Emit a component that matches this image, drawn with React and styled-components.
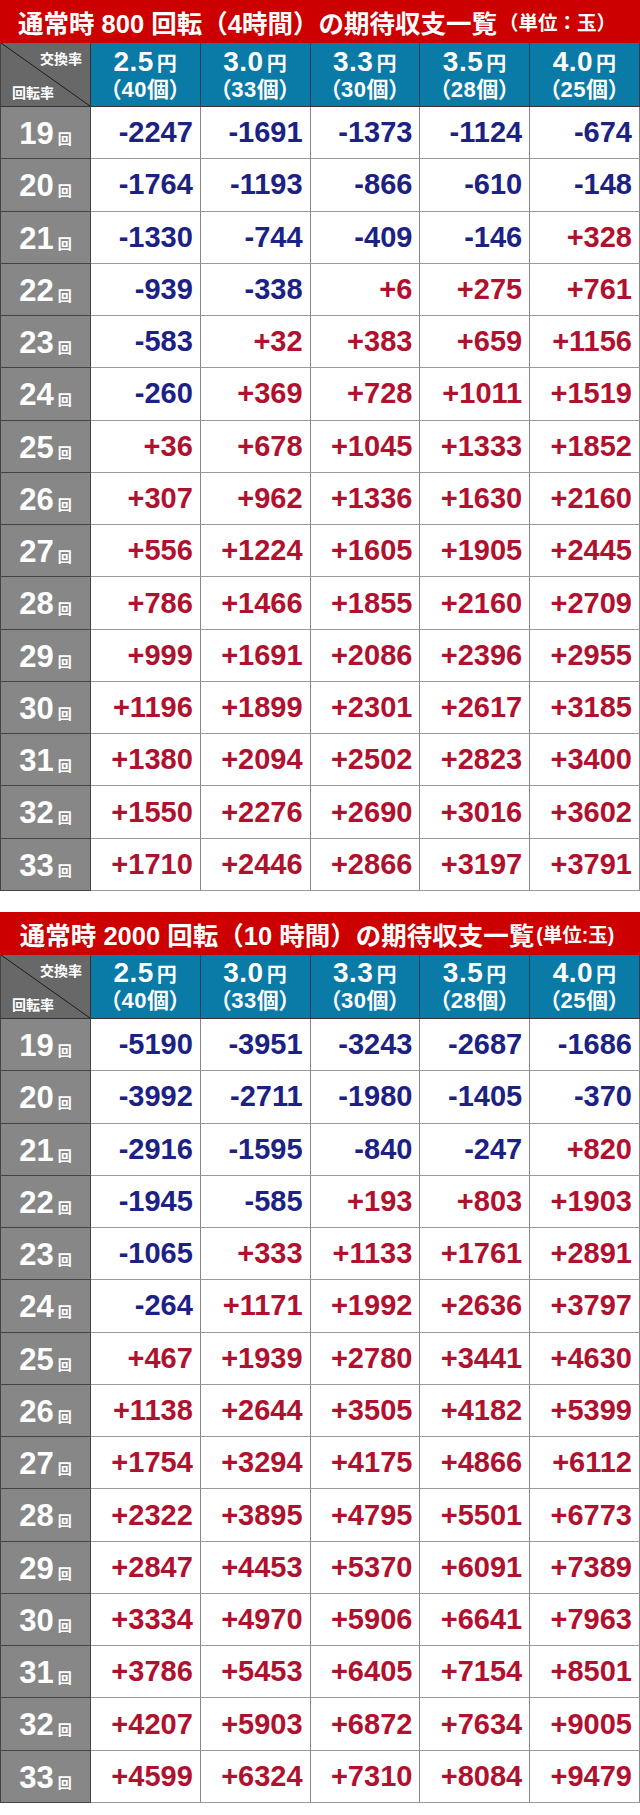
import React from "react";
import styled, {createGlobalStyle} from "styled-components";

const rates = [
  {yen: "2.5", balls: "40"},
  {yen: "3.0", balls: "33"},
  {yen: "3.3", balls: "30"},
  {yen: "3.5", balls: "28"},
  {yen: "4.0", balls: "25"},
];

const tables = [
  {
    title: "通常時 800 回転（4時間）の期待収支一覧",
    unit: "（単位：玉）",
    rows: [
      [-2247, -1691, -1373, -1124, -674],
      [-1764, -1193, -866, -610, -148],
      [-1330, -744, -409, -146, 328],
      [-939, -338, 6, 275, 761],
      [-583, 32, 383, 659, 1156],
      [-260, 369, 728, 1011, 1519],
      [36, 678, 1045, 1333, 1852],
      [307, 962, 1336, 1630, 2160],
      [556, 1224, 1605, 1905, 2445],
      [786, 1466, 1855, 2160, 2709],
      [999, 1691, 2086, 2396, 2955],
      [1196, 1899, 2301, 2617, 3185],
      [1380, 2094, 2502, 2823, 3400],
      [1550, 2276, 2690, 3016, 3602],
      [1710, 2446, 2866, 3197, 3791],
    ],
  },
  {
    title: "通常時 2000 回転（10 時間）の期待収支一覧",
    unit: "(単位:玉)",
    rows: [
      [-5190, -3951, -3243, -2687, -1686],
      [-3992, -2711, -1980, -1405, -370],
      [-2916, -1595, -840, -247, 820],
      [-1945, -585, 193, 803, 1903],
      [-1065, 333, 1133, 1761, 2891],
      [-264, 1171, 1992, 2636, 3797],
      [467, 1939, 2780, 3441, 4630],
      [1138, 2644, 3505, 4182, 5399],
      [1754, 3294, 4175, 4866, 6112],
      [2322, 3895, 4795, 5501, 6773],
      [2847, 4453, 5370, 6091, 7389],
      [3334, 4970, 5906, 6641, 7963],
      [3786, 5453, 6405, 7154, 8501],
      [4207, 5903, 6872, 7634, 9005],
      [4599, 6324, 7310, 8084, 9479],
    ],
  },
];

const App = () => {
  return (
    <Page>
      <GlobalStyle />
      {tables.map((t, ti) => (
        <Table key={ti}>
          <Title>
            {t.title}
            <Unit>{t.unit}</Unit>
          </Title>
          <Corner>
            <CornerTop>交換率</CornerTop>
            <CornerBottom>回転率</CornerBottom>
          </Corner>
          {rates.map((r) => (
            <RateHead key={r.yen}>
              <RateLine>
                {r.yen}
                <Yen>円</Yen>
              </RateLine>
              <BallLine>（{r.balls}個）</BallLine>
            </RateHead>
          ))}
          {t.rows.map((row, i) => (
            <React.Fragment key={i}>
              <SpinLabel>
                {19 + i}
                <Kai>回</Kai>
              </SpinLabel>
              {row.map((v, j) => (
                <Value key={j} $plus={v > 0}>
                  {v > 0 ? "+" + v : v}
                </Value>
              ))}
            </React.Fragment>
          ))}
        </Table>
      ))}
    </Page>
  );
};

const GlobalStyle = createGlobalStyle`
  body {
    margin: 0;
    background: #ffffff;
    font-family: "Liberation Sans", "Noto Sans CJK JP", sans-serif;
  }
`;

const Page = styled.div`
  width: 640px;
  display: flex;
  flex-direction: column;
  gap: 21px;
`;

const Table = styled.div`
  display: grid;
  grid-template-columns: 91px repeat(5, 1fr);
  grid-template-rows: 43px 64px repeat(15, 52.27px);
`;

const Title = styled.div`
  grid-column: 1 / -1;
  background: #cc0000;
  color: #ffffff;
  font-weight: bold;
  font-size: 25.5px;
  display: flex;
  align-items: center;
  justify-content: center;
  white-space: nowrap;
  padding-right: 6px;
`;

const Unit = styled.span`
  font-size: 19.5px;
  margin-left: 2px;
`;

const Corner = styled.div`
  box-sizing: border-box;
  border-left: 1px solid #444;
  border-bottom: 1px solid #333;
  border-right: 1px solid #333;
  background: linear-gradient(
    to top right,
    #686868 calc(50% - 0.8px),
    #1a1a1a 50%,
    #686868 calc(50% + 0.8px)
  );
  color: #ffffff;
  font-weight: bold;
  font-size: 14px;
  display: flex;
  flex-direction: column;
  justify-content: space-between;
  padding: 5px 8px 4px 11px;
`;

const CornerTop = styled.div`
  align-self: flex-end;
`;

const CornerBottom = styled.div`
  align-self: flex-start;
`;

const RateHead = styled.div`
  box-sizing: border-box;
  background: #0a7aa6;
  border-right: 1px solid #1c3f55;
  border-bottom: 1px solid #333;
  color: #ffffff;
  font-weight: bold;
  display: flex;
  flex-direction: column;
  align-items: center;
  justify-content: center;
`;

const RateLine = styled.div`
  font-size: 28px;
  line-height: 28px;
  letter-spacing: 0.5px;
`;

const Yen = styled.span`
  font-size: 20px;
  margin-left: 3px;
`;

const BallLine = styled.div`
  font-size: 22px;
  line-height: 24px;
  font-feature-settings: "palt";
  letter-spacing: 0.5px;
`;

const SpinLabel = styled.div`
  box-sizing: border-box;
  background: #878787;
  border-left: 1px solid #444;
  border-right: 1px solid #444;
  border-bottom: 1px solid #444;
  color: #ffffff;
  font-weight: bold;
  font-size: 31px;
  display: flex;
  align-items: baseline;
  justify-content: center;
  padding-top: 9px;
`;

const Kai = styled.span`
  font-size: 14px;
  margin-left: 4px;
`;

const Value = styled.div`
  box-sizing: border-box;
  background: #ffffff;
  border-right: 1px solid #888;
  border-bottom: 1px solid #9a9a9a;
  color: ${(p) => (p.$plus ? "#b0112e" : "#1c2283")};
  font-weight: bold;
  font-size: 29px;
  display: flex;
  align-items: center;
  justify-content: flex-end;
  padding-right: 7px;
`;

export default App;
